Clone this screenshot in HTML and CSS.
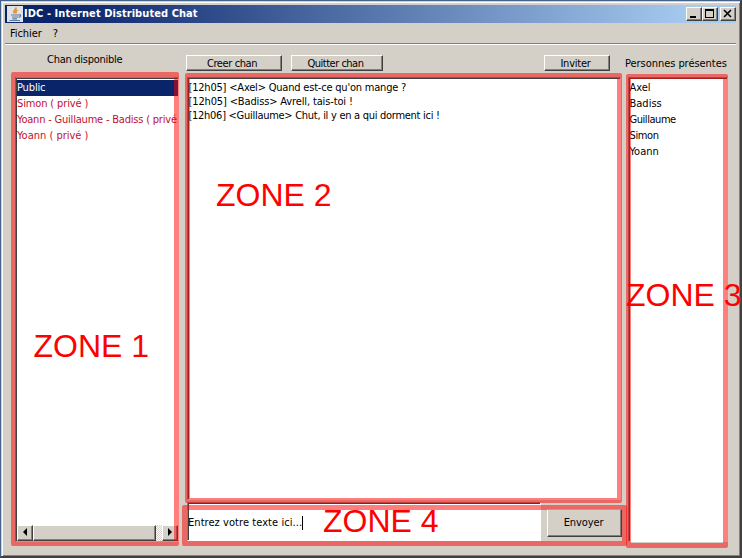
FILE: index.html
```html
<!DOCTYPE html>
<html lang="fr">
<head>
<meta charset="utf-8">
<title>IDC - Internet Distributed Chat</title>
<link rel="stylesheet" href="styles.css">
</head>
<body>
<div class="window">
  <header class="titlebar">
    <svg class="java" width="16" height="16" viewBox="0 0 16 16"><rect width="16" height="16" fill="#dfe3e6"/><path d="M8.500 1.500c2 2-3.500 3-1 6M10.500 4c-2 1-2 2-1 3.500" fill="none" stroke="#e8932f" stroke-width="1.700"/><path d="M4 9h7.500M5 11h6M5.500 12.800h4.500M2.500 14.500h10.500M11.500 9c3-1 2.500 2 0 2.300" fill="none" stroke="#587ba0" stroke-width="1.200"/></svg>
    <h1>IDC - Internet Distributed Chat</h1>
    <div class="controls">
      <span class="ctl"><svg width="14" height="12"><path d="M3 8h6v2H3z"/></svg></span>
      <span class="ctl"><svg width="14" height="12"><path d="M2 1h9v9H2zM3 3v6h7V3z" fill-rule="evenodd"/></svg></span>
      <span class="ctl close"><svg width="14" height="12"><path d="M3 2l7 7M10 2l-7 7" stroke="#000" stroke-width="1.600"/></svg></span>
    </div>
  </header>
  <nav class="menu"><span>Fichier</span><span>?</span></nav>
  <main>
    <section class="channels">
      <h2>Chan disponible</h2>
      <div class="box list">
        <ul>
          <li class="selected">Public</li>
          <li class="private">Simon ( privé )</li>
          <li class="long">Yoann - Guillaume - Badiss ( privé</li>
          <li>Yoann ( privé )</li>
        </ul>
        <div class="scrollbar">
          <span class="arrow"><svg width="13" height="13"><path d="M9 2v8L5 6z"/></svg></span>
          <span class="thumb"></span>
          <span class="arrow end"><svg width="13" height="13"><path d="M5 2v8l4-4z"/></svg></span>
        </div>
      </div>
    </section>
    <section class="chat">
      <div class="toolbar">
        <button class="create">Creer chan</button>
        <button class="leave">Quitter chan</button>
        <button class="invite">Inviter</button>
      </div>
      <div class="box log">
        <p class="m1">[12h05] &lt;Axel&gt; Quand est-ce qu'on mange ?</p>
        <p class="m2">[12h05] &lt;Badiss&gt; Avrell, tais-toi !</p>
        <p class="m3">[12h06] &lt;Guillaume&gt; Chut, il y en a qui dorment ici !</p>
      </div>
      <div class="compose">
        <div class="box field"><span>Entrez votre texte ici...</span><i class="caret"></i></div>
        <button class="send">Envoyer</button>
      </div>
    </section>
    <section class="people">
      <h2>Personnes présentes</h2>
      <div class="box list">
        <ul><li>Axel</li><li>Badiss</li><li class="tight">Guillaume</li><li class="simon">Simon</li><li>Yoann</li></ul>
      </div>
    </section>
  </main>
  <div class="frame f1"></div><div class="frame f2"></div><div class="frame f3"></div><div class="frame f4"></div>
  <div class="zone z1">ZONE 1</div><div class="zone z2">ZONE 2</div><div class="zone z3">ZONE 3</div><div class="zone z4">ZONE 4</div>
</div>
</body>
</html>
```
FILE: styles.css
```css
* { box-sizing: border-box; margin: 0; padding: 0; }
body { width: 742px; height: 558px; overflow: hidden; background: #45648c; }
.window {
  position: relative; width: 742px; height: 558px; padding: 2px 4px 2px 4px;
  background: #d4d0c8; border: 1px solid #45648c; border-right: 2px solid #404040; border-bottom: 2px solid #404040;
  box-shadow: inset 1px 1px #d4d0c8, inset 2px 2px #fff, inset -1px -1px #808080;
  font: 11px/14px "DejaVu Sans Condensed", "Noto Sans", sans-serif; color: #000;
}
.titlebar { display: flex; align-items: center; height: 18px; margin-top: 2px; padding: 0 0 0 2px; background: linear-gradient(90deg, #0a246a 8%, #a6caf0 94%); }
.java { margin-right: 1px; }
h1 { font-size: 11px; line-height: 18px; color: #fff; white-space: nowrap; letter-spacing: .07px; }
.controls { display: flex; margin-left: auto; }
.ctl, button, .thumb, .arrow { background: #d4d0c8; border: 1px solid; border-color: #fff #404040 #404040 #fff; box-shadow: inset -1px -1px #808080; }
.ctl { width: 16px; height: 14px; }
.ctl svg, .arrow svg { display: block; }
.close { margin-left: 2px; }
.menu { display: flex; gap: 11px; height: 21px; padding: 4px 5px 0; border-bottom: 1px solid #808080; box-shadow: 0 1px #fff; letter-spacing: -.08px; }
main { display: flex; padding: 1px 0 0 10px; }
h2 { font-size: 11px; font-weight: normal; line-height: 14px; white-space: nowrap; }
.channels { width: 164px; margin-right: 7px; }
.channels h2 { margin: 8px 0 10px 32px; letter-spacing: -.27px; }
.box { background: #fff; border: 1px solid; border-color: #808080 #fff #fff #808080; box-shadow: inset 1px 1px #404040; overflow: hidden; }
.list { display: flex; flex-direction: column; justify-content: space-between; height: 465px; padding: 2px 0 0 1px; }
ul { list-style: none; }
li { height: 16px; line-height: 16px; white-space: nowrap; }
.channels li { color: #c0102c; }
.channels .selected { background: #0a246a; color: #fff; letter-spacing: -.15px; }
.private { letter-spacing: -.13px; }
.channels .long { letter-spacing: -.2px; }
.scrollbar { display: flex; height: 16px; background: repeating-conic-gradient(#fff 0 25%, #d4d0c8 0 50%) 0 0 / 2px 2px; }
.arrow { width: 16px; height: 16px; }
.thumb { width: 123px; }
.end { margin-left: auto; }
.chat { width: 436px; }
.toolbar { display: flex; height: 16px; margin: 10px 0 6px; }
button { display: block; font: inherit; color: #000; text-align: center; }
.toolbar button { height: 16px; line-height: 16px; }
.toolbar .create { width: 96px; margin-right: 9px; padding-right: 4px; letter-spacing: -.4px; }
.leave { width: 92px; padding-right: 3px; letter-spacing: -.5px; }
.invite { width: 66px; margin-left: auto; margin-right: 12px; padding-right: 3px; letter-spacing: -.25px; }
.log { height: 423px; padding: 3px 0 0 .5px; margin: 0 1px; }
.log p { line-height: 14px; white-space: nowrap; }
.m1 { letter-spacing: -.2px; }
.m2 { letter-spacing: -.14px; }
.m3 { letter-spacing: -.28px; }
.compose { display: flex; margin: 2px 0 0 1px; }
.field { display: flex; align-items: center; width: 354px; height: 39px; padding: 3px 0 0; letter-spacing: .06px; }
.caret { width: 1px; height: 14px; background: #000; }
.send { width: 75px; height: 28px; margin: 7px 0 0 6px; padding: 0 2px 0 0; letter-spacing: -.1px; }
.people { width: 100px; margin-left: 6px; }
.people h2 { margin: 12px 0 6px -3px; letter-spacing: -.05px; }
.people .list { padding-left: .5px; }
.tight { letter-spacing: -.45px; }
.simon { letter-spacing: -.4px; }
.frame { position: absolute; border: 5px solid rgba(255, 0, 0, .5); border-radius: 2px; }
.f1 { left: 10px; top: 71px; width: 168px; height: 474px; }
.f2 { left: 184px; top: 72px; width: 437px; height: 430px; }
.f3 { left: 625px; top: 73px; width: 102px; height: 474px; }
.f4 { left: 181px; top: 504px; width: 445px; height: 41px; }
.zone { position: absolute; font: 32px/36px "Liberation Sans", Arial, sans-serif; color: #f00; white-space: nowrap; }
.z1 { left: 32.5px; top: 327px; }
.z2 { left: 215px; top: 176px; }
.z3 { left: 625px; top: 276px; }
.z4 { left: 322px; top: 502px; }
```
